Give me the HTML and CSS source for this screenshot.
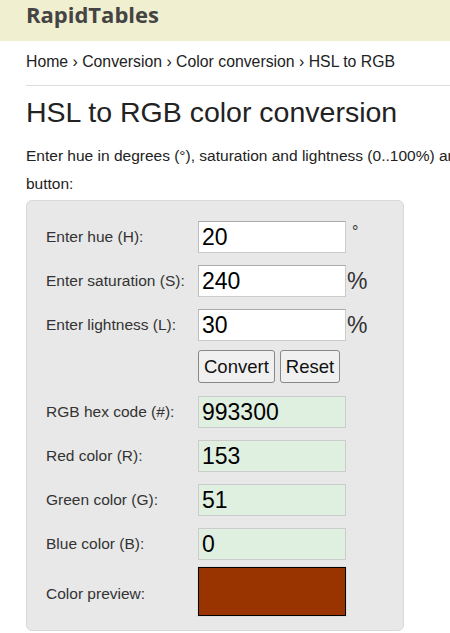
FILE: index.html
```html
<!DOCTYPE html>
<html lang="en">
<head>
  <meta charset="UTF-8">
  <meta name="viewport" content="width=device-width, initial-scale=1.0">
  <title>HSL to RGB color conversion</title>
  <link rel="stylesheet" href="styles.css">
</head>
<body>
  <div class="header">
    <span class="logo">RapidTables</span>
  </div>

  <div class="main">
    <div class="breadcrumb">Home &rsaquo; Conversion &rsaquo; Color conversion &rsaquo; HSL to RGB</div>
    <h1>HSL to RGB color conversion</h1>
    <p class="intro">Enter hue in degrees (&deg;), saturation and lightness (0..100%) and press the Convert<br>button:</p>

    <!-- Converter form -->
    <form class="calc" onsubmit="return false">
      <label for="hue">Enter hue (H):</label>
      <input type="text" id="hue" class="field" value="20">
      <span class="unit deg">&deg;</span>

      <label for="sat">Enter saturation (S):</label>
      <input type="text" id="sat" class="field" value="240">
      <span class="unit">%</span>

      <label for="light">Enter lightness (L):</label>
      <input type="text" id="light" class="field" value="30">
      <span class="unit">%</span>

      <span></span>
      <div class="buttons">
        <button type="button">Convert</button>
        <button type="reset">Reset</button>
      </div>
      <span></span>

      <label for="hex">RGB hex code (#):</label>
      <input type="text" id="hex" class="field out" value="993300" readonly>
      <span></span>

      <label for="red">Red color (R):</label>
      <input type="text" id="red" class="field out" value="153" readonly>
      <span></span>

      <label for="green">Green color (G):</label>
      <input type="text" id="green" class="field out" value="51" readonly>
      <span></span>

      <label for="blue">Blue color (B):</label>
      <input type="text" id="blue" class="field out" value="0" readonly>
      <span></span>

      <label>Color preview:</label>
      <div class="preview"></div>
      <span></span>
    </form>
  </div>
</body>
</html>
```

FILE: styles.css
```css
body {
  margin: 0;
  font-family: Arial, "Liberation Sans", sans-serif;
  color: #222;
  background-color: #fff;
  overflow: hidden;
}
.header {
  background-color: #f0efd0;
  height: 41px;
  padding-left: 26px;
}
.logo {
  display: block;
  font-family: "Open Sans", sans-serif;
  font-weight: bold;
  font-size: 22px;
  line-height: 29px;
  color: #444;
}
.main {
  padding-left: 26px;
  overflow: hidden;
}
.breadcrumb {
  font-size: 15.8px;
  line-height: 18px;
  color: #222;
  padding: 12px 0 14px;
  border-bottom: 1px solid #ddd;
}
h1 {
  font-weight: normal;
  font-size: 28.5px;
  line-height: 33px;
  color: #222;
  margin: 10px 0 13px;
}
.intro {
  font-size: 15.5px;
  line-height: 28px;
  white-space: nowrap;
  margin: 0 0 2px;
}
.calc {
  width: 357px;
  background-color: #e8e8e8;
  border: 1px solid #d8d8d8;
  border-radius: 6px;
  padding: 20px 0 14px 19px;
  display: grid;
  grid-template-columns: 152px 148px auto;
  row-gap: 12px;
  align-items: center;
}
label {
  font-size: 15.5px;
  color: #333;
  white-space: nowrap;
}
.field {
  box-sizing: border-box;
  width: 148px;
  height: 32px;
  margin: 0;
  padding: 0 3px;
  font-family: Arial, "Liberation Sans", sans-serif;
  font-size: 23px;
  color: #000;
  background-color: #fff;
  border: 1px solid #ccc;
  border-top-color: #aaa;
  border-left-color: #bbb;
}
.out {
  background-color: #e0f0e0;
  border: 1px solid #ccc;
}
.unit {
  font-size: 23px;
  color: #333;
  padding-left: 1px;
}
.deg {
  font-size: 16px;
  padding: 2px 0 0 6px;
  align-self: start;
}
.buttons {
  display: flex;
  gap: 5px;
  margin: -3px 0 1px;
}
button {
  font-family: Arial, "Liberation Sans", sans-serif;
  font-size: 18.5px;
  color: #111;
  height: 33px;
  padding: 0 5px;
  background-color: #f0f0f0;
  border: 1px solid #888;
  border-radius: 3px;
}
.preview {
  box-sizing: border-box;
  width: 148px;
  height: 49px;
  background-color: #993300;
  border: 1px solid #000;
  outline: 1px solid #ddd;
  margin-top: -5px;
}
```
